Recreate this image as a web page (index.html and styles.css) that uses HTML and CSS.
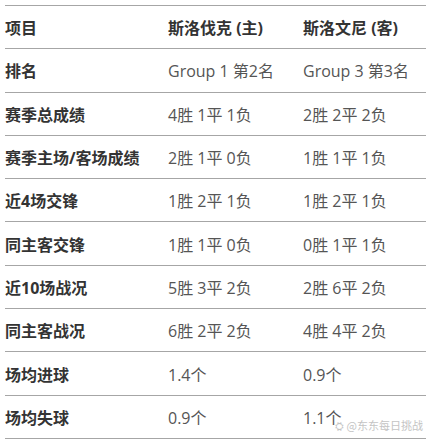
FILE: index.html
```html
<!DOCTYPE html>
<html lang="zh-CN">
<head>
<meta charset="utf-8">
<link rel="stylesheet" href="styles.css">
</head>
<body>
<div class="wrap">
<table class="stats">
<colgroup><col class="c1"><col class="c2"><col class="c3"></colgroup>
<tr class="head"><th>项目</th><th>斯洛伐克 (主)</th><th>斯洛文尼 (客)</th></tr>
<tr><th>排名</th><td>Group 1 第2名</td><td>Group 3 第3名</td></tr>
<tr><th>赛季总成绩</th><td>4胜 1平 1负</td><td>2胜 2平 2负</td></tr>
<tr><th>赛季主场/客场成绩</th><td>2胜 1平 0负</td><td>1胜 1平 1负</td></tr>
<tr><th>近4场交锋</th><td>1胜 2平 1负</td><td>1胜 2平 1负</td></tr>
<tr><th>同主客交锋</th><td>1胜 1平 0负</td><td>0胜 1平 1负</td></tr>
<tr><th>近10场战况</th><td>5胜 3平 2负</td><td>2胜 6平 2负</td></tr>
<tr><th>同主客战况</th><td>6胜 2平 2负</td><td>4胜 4平 2负</td></tr>
<tr><th>场均进球</th><td>1.4个</td><td>0.9个</td></tr>
<tr><th>场均失球</th><td>0.9个</td><td class="last">1.1个<span class="mark">⛭ @东东每日挑战</span></td></tr>
</table>
</div>
</body>
</html>
```

FILE: styles.css
```css
html, body {
  margin: 0;
  padding: 0;
  background: #fff;
}
.wrap {
  padding: 5px 0 0 5px;
}
.stats {
  width: 421px;
  border-collapse: collapse;
  table-layout: fixed;
  font-family: "Open Sans", "Noto Sans CJK SC", sans-serif;
  font-size: 16px;
  border-top: 1px solid #a6a6a6;
}
.c1 { width: 163px; }
.c2 { width: 135px; }
.c3 { width: 123px; }
.stats th, .stats td {
  height: 42.3px;
  padding: 0;
  text-align: left;
  vertical-align: middle;
  border-bottom: 1px solid #a6a6a6;
  white-space: nowrap;
}
.stats th {
  font-weight: bold;
  color: #333;
}
.stats td {
  color: #555;
}
.last {
  position: relative;
}
.mark {
  position: absolute;
  right: 3px;
  bottom: 5px;
  font-size: 11px;
  color: #c4c4c4;
  font-family: "Noto Sans CJK SC", sans-serif;
}
```
